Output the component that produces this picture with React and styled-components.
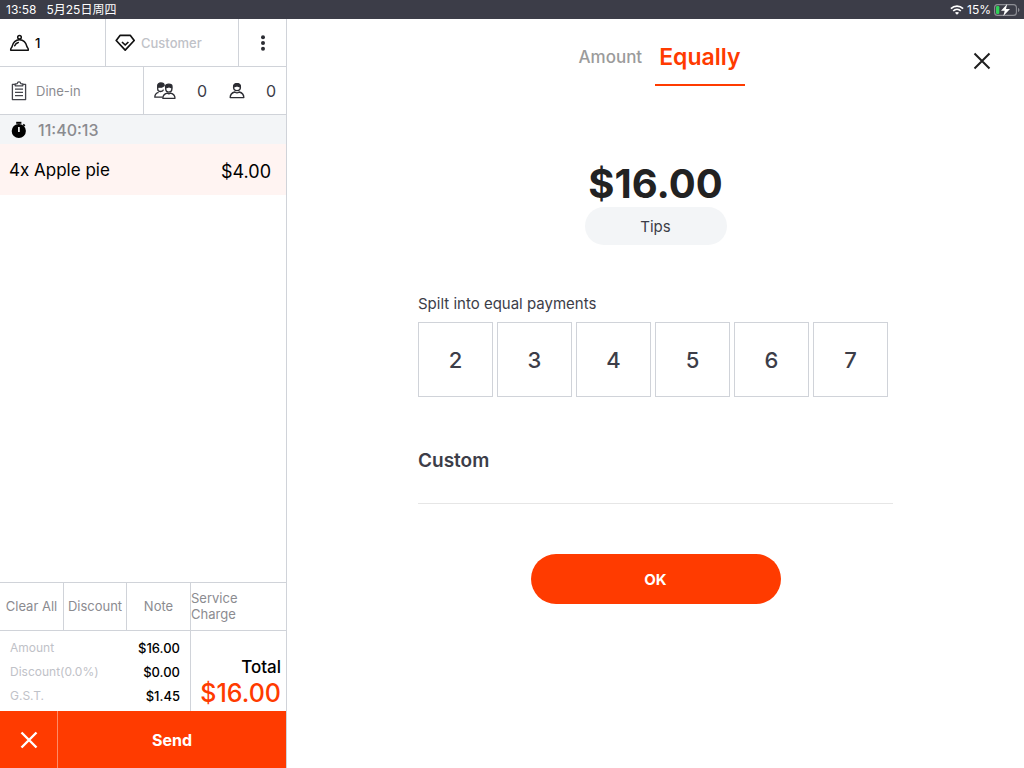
import React, { useState } from "react";
import styled, { ThemeProvider, createGlobalStyle } from "styled-components";

const theme = {
    colors: {
        orange: "#ff3b00",
        line: "#d0d3d9",
        dark: "#3c3d48",
        gray: "#8b8b90",
        light: "#bfc2c8",
        pale: "#f3f5f7",
        black: "#000"
    }
};

const splits = [2, 3, 4, 5, 6, 7];

const summary = [
    { name: "Amount", value: "$16.00" },
    { name: "Discount(0.0%)", value: "$0.00" },
    { name: "G.S.T.", value: "$1.45" }
];

const DishIcon = () => (
    <svg width="20" height="18" viewBox="0 0 20 18" fill="none" stroke="#111" strokeWidth="1.5" strokeLinecap="round" strokeLinejoin="round" aria-hidden="true">
        <circle cx="10.500" cy="3.200" r="1.800" />
        <path d="M1.700 16.200c-.2-2 .8-2.600 1.200-3.200C3.900 8.800 6.700 5.800 10.500 5.800s6.600 3 7.600 7.200c.4.6 1.400 1.200 1.200 3.200z" />
        <path d="M5.700 11.800c.7-1.700 1.900-2.800 3.600-3.300" />
    </svg>
);

const DiamondIcon = () => (
    <svg width="20" height="18" viewBox="0 0 20 18" fill="none" stroke="#111" strokeWidth="1.700" strokeLinejoin="round" aria-hidden="true">
        <path d="M5.200 1.300h10l4 5.200-9 9.600-9-9.600z" />
        <path d="M7 8l3.200 3 3.200-3" />
    </svg>
);

const ClipboardIcon = () => (
    <svg width="16" height="20" viewBox="0 0 16 20" fill="none" stroke="#44454c" strokeWidth="1.300" strokeLinejoin="round" aria-hidden="true">
        <path d="M4 3.400H1.400v15.200h13.200V3.400H12" />
        <path d="M4.200 4.800V3l2-.4C6.400 1.500 7 .9 8 .9s1.600.6 1.800 1.700l2 .4v1.800z" />
        <path d="M4 8.200h8M4 11.400h8M4 14.600h8" />
    </svg>
);

const PeopleIcon = () => (
    <svg width="22" height="18" viewBox="0 0 22 18" fill="none" stroke="#2c2d33" strokeWidth="1.300" strokeLinejoin="round" aria-hidden="true">
        <path d="M3.700 5.200V3.400C3.700 2 4.900 1 6.900 1s3.200.8 3.300 2.600L7.600 5.200z" fill="#2c2d33" />
        <path d="M3.700 5v2c0 1.500 1.400 2.500 2.900 2.500 1.300 0 2.600-.7 2.900-1.900" />
        <path d="M8.600 15.200H.8c0-2.900 1.400-4.300 3.800-4.900" />
        <path d="M11.600 5.800V4.400c0-1.400 1.200-2.200 3.200-2.200s3.200.8 3.200 2.200v1.400c-1.400 0-2.200-.4-3-1-.8.6-2 1-3.400 1z" fill="#2c2d33" />
        <path d="M11.700 5.800v1.300c0 1.700 1.300 3 3.100 3s3.100-1.300 3.100-3V5.800" />
        <path d="M8.800 16.300c0-3 1.600-4.500 4.400-5.200 1 .8 2.400.8 3.400 0 2.800.7 4.400 2.200 4.400 5.200z" />
    </svg>
);

const PersonIcon = () => (
    <svg width="16" height="17" viewBox="0 0 16 17" fill="none" stroke="#2c2d33" strokeWidth="1.400" strokeLinejoin="round" aria-hidden="true">
        <circle cx="8" cy="5.200" r="3.400" />
        <path d="M4.700 4.800C5 2.900 6.200 1.700 8 1.700s3 1.200 3.300 3.100C9.800 4.600 8.900 4.200 8 3.500c-.9.7-1.800 1.100-3.300 1.300z" fill="#2c2d33" />
        <path d="M1.200 15.600c0-3.200 1.700-4.900 4.600-5.600 1.300 1 3.100 1 4.400 0 2.900.7 4.600 2.400 4.600 5.600z" />
    </svg>
);

const StopwatchIcon = () => (
    <svg width="16" height="18" viewBox="0 0 16 18" aria-hidden="true">
        <path d="M5.200.8h5.200v2H5.200z" />
        <path d="M12.800 2.800l1.600 1.400-1.200 1.300-1.500-1.400z" />
        <circle cx="7.800" cy="10" r="7.100" />
        <path d="M7.100 6h1.600v5H7.100z" fill="#fff" />
    </svg>
);

const DotsIcon = () => (
    <svg width="6" height="16" viewBox="0 0 6 16" fill="#2c2d33" aria-hidden="true">
        <circle cx="3" cy="2.200" r="2" />
        <circle cx="3" cy="8" r="2" />
        <circle cx="3" cy="13.800" r="2" />
    </svg>
);

const CrossIcon = ({ size = 18, color = "#1f1f1f", width = 2 }) => (
    <svg width={size} height={size} viewBox="0 0 18 18" fill="none" stroke={color} strokeWidth={width} aria-hidden="true">
        <path d="M1.500 1.500l15 15M16.500 1.500l-15 15" />
    </svg>
);

const WifiIcon = () => (
    <svg width="14" height="10" viewBox="0 0 14 10" fill="none" stroke="#fff" strokeWidth="1.700" aria-hidden="true">
        <path d="M.9 3.700c3.500-3.400 8.700-3.400 12.200 0" />
        <path d="M3.200 6c2.200-2.100 5.400-2.100 7.600 0" />
        <path d="M7 9.800L4.900 7.700c1.200-1.100 3-1.100 4.200 0z" fill="#fff" stroke="none" />
    </svg>
);

const BatteryIcon = () => (
    <svg width="26" height="12" viewBox="0 0 26 12" fill="none" aria-hidden="true">
        <rect x=".6" y=".6" width="21.800" height="10.800" rx="3" stroke="#8d8e95" strokeWidth="1.100" />
        <path d="M24 4v4c.9-.3 1.400-1 1.400-2S24.900 4.300 24 4z" fill="#8d8e95" />
        <rect x="2" y="2" width="3.300" height="8" rx="1.200" fill="#30d158" />
        <path d="M13.200 0L7 6.800h3.700L9.300 12l6.700-7h-4z" fill="#fff" />
    </svg>
);

const App = () => {

    const [tab, setTab] = useState("Equally");
    const [custom, setCustom] = useState("");

    const onChange = (e) => {
        setCustom(e.target.value);
    };

    return (
        <ThemeProvider theme={theme}>
            <GlobalStyle />
            <Screen>
                <StatusBar>
                    <StatusGroup $gap={10}>
                        <span>13:58</span>
                        <span>5月25日周四</span>
                    </StatusGroup>
                    <StatusGroup $gap={3}>
                        <WifiIcon />
                        <span>15%</span>
                        <BatteryIcon />
                    </StatusGroup>
                </StatusBar>
                <Body>
                    <Order>
                        <InfoRow $columns="106px 133px 1fr">
                            <InfoCell $dark>
                                <DishIcon />
                                1
                            </InfoCell>
                            <InfoCell $faint>
                                <DiamondIcon />
                                Customer
                            </InfoCell>
                            <InfoCell $center aria-label="More">
                                <DotsIcon />
                            </InfoCell>
                        </InfoRow>
                        <InfoRow $columns="144px 1fr">
                            <InfoCell>
                                <ClipboardIcon />
                                Dine-in
                            </InfoCell>
                            <Guests>
                                <Guest>
                                    <PeopleIcon />
                                    0
                                </Guest>
                                <Guest>
                                    <PersonIcon />
                                    0
                                </Guest>
                            </Guests>
                        </InfoRow>
                        <Timer>
                            <StopwatchIcon />
                            11:40:13
                        </Timer>
                        <Items>
                            <Item>
                                <span>4x Apple pie</span>
                                <Price>$4.00</Price>
                            </Item>
                        </Items>
                        <Actions>
                            <Action>Clear All</Action>
                            <Action>Discount</Action>
                            <Action>Note</Action>
                            <Action $left>Service Charge</Action>
                        </Actions>
                        <Summary>
                            <Lines>
                                {summary.map((line) =>
                                    <Line key={line.name}>
                                        <dt>{line.name}</dt>
                                        <dd>{line.value}</dd>
                                    </Line>
                                )}
                            </Lines>
                            <Total>
                                <TotalLabel>Total</TotalLabel>
                                <TotalValue>$16.00</TotalValue>
                            </Total>
                        </Summary>
                        <SendBar>
                            <SendButton aria-label="Cancel order">
                                <CrossIcon color="#fff" width={2.4} />
                            </SendButton>
                            <SendButton>Send</SendButton>
                        </SendBar>
                    </Order>
                    <Payment>
                        <PaymentHeader>
                            <Tabs>
                                {["Amount", "Equally"].map((name) =>
                                    <Tab key={name} $active={tab === name} onClick={() => setTab(name)}>{name}</Tab>
                                )}
                            </Tabs>
                            <Close aria-label="Close">
                                <CrossIcon />
                            </Close>
                        </PaymentHeader>
                        <Panel>
                            <Due>$16.00</Due>
                            <Tips>Tips</Tips>
                            <SplitTitle>Spilt into equal payments</SplitTitle>
                            <Splits>
                                {splits.map((count) =>
                                    <Split key={count}>{count}</Split>
                                )}
                            </Splits>
                            <CustomInput
                                type="text"
                                aria-label="Custom"
                                placeholder="Custom"
                                value={custom}
                                onChange={onChange}
                            />
                            <Ok>OK</Ok>
                        </Panel>
                    </Payment>
                </Body>
            </Screen>
        </ThemeProvider>
    )
}

export default App;

const GlobalStyle = createGlobalStyle`
    * {
        box-sizing: border-box;
    }

    body {
        margin: 0;
        background: #fff;
        font-family: Inter, "Noto Sans CJK SC", sans-serif;
    }

    button {
        margin: 0;
        padding: 0;
        border: none;
        background: none;
        color: inherit;
        font: inherit;
        cursor: pointer;
    }

    svg {
        flex-shrink: 0;
    }
`;

const Screen = styled.div`
    display: flex;
    flex-direction: column;
    min-height: 100vh;
`;

const StatusBar = styled.header`
    display: flex;
    justify-content: space-between;
    align-items: center;
    height: 19px;
    padding: 0 4px 0 6px;
    background: ${({ theme }) => theme.colors.dark};
    color: #fff;
    font-size: 12px;
    line-height: 18px;
`;

const StatusGroup = styled.div`
    display: flex;
    align-items: center;
    gap: ${({ $gap }) => $gap}px;
`;

const Body = styled.div`
    display: flex;
    flex: 1;
`;

const Order = styled.aside`
    display: flex;
    flex-direction: column;
    flex-shrink: 0;
    width: 287px;
    border-right: 1px solid ${({ theme }) => theme.colors.line};
`;

const InfoRow = styled.div`
    display: grid;
    grid-template-columns: ${({ $columns }) => $columns};
    height: 48px;
    border-bottom: 1px solid ${({ theme }) => theme.colors.line};
`;

const InfoCell = styled.button`
    display: flex;
    align-items: center;
    justify-content: ${({ $center }) => $center ? "center" : "flex-start"};
    gap: ${({ $dark, $faint }) => $dark || $faint ? "6px" : "9px"};
    padding: 0 ${({ $center }) => $center ? "0" : "9px"};
    padding-left: ${({ $center, $dark, $faint }) => $center ? "0" : $dark || $faint ? "9px" : "11px"};
    color: ${({ $dark, $faint, theme }) => $dark ? theme.colors.black : $faint ? theme.colors.light : theme.colors.gray};
    font-size: 13px;
    font-weight: ${({ $dark, $faint }) => $dark || $faint ? 500 : 400};

    &:not(:last-child) {
        border-right: 1px solid ${({ theme }) => theme.colors.line};
    }
`;

const Guests = styled.div`
    display: flex;
    align-items: center;
    gap: 22px;
    padding: 0 10px;
    color: ${({ theme }) => theme.colors.dark};
    font-size: 16px;
`;

const Guest = styled.div`
    display: flex;
    flex: 1 0 auto;
    align-items: center;
    justify-content: space-between;
`;

const Timer = styled.div`
    display: flex;
    align-items: center;
    gap: 11px;
    height: 29px;
    padding-left: 11px;
    background: ${({ theme }) => theme.colors.pale};
    color: ${({ theme }) => theme.colors.gray};
    font-size: 16px;
    font-weight: 500;
`;

const Items = styled.ul`
    flex: 1;
    margin: 0;
    padding: 0;
    list-style: none;
`;

const Item = styled.li`
    display: flex;
    justify-content: space-between;
    align-items: center;
    height: 51px;
    padding: 0 15px 0 9px;
    background: #fff4f2;
    font-size: 17px;
`;

const Price = styled.span`
    padding-top: 3px;
    font-size: 18px;
`;

const Actions = styled.div`
    display: grid;
    grid-template-columns: 64px 63px 64px 1fr;
    height: 49px;
    border-top: 1px solid ${({ theme }) => theme.colors.line};
    border-bottom: 1px solid ${({ theme }) => theme.colors.line};
`;

const Action = styled.button`
    padding-right: ${({ $left }) => $left ? "40px" : "0"};
    padding-bottom: 2px;
    color: ${({ theme }) => theme.colors.gray};
    font-size: 13px;
    line-height: 16px;
    text-align: ${({ $left }) => $left ? "left" : "center"};

    &:not(:last-child) {
        border-right: 1px solid ${({ theme }) => theme.colors.line};
    }
`;

const Summary = styled.div`
    display: grid;
    grid-template-columns: 191px 1fr;
    height: 80px;
`;

const Lines = styled.dl`
    display: flex;
    flex-direction: column;
    justify-content: flex-end;
    margin: 0;
    padding: 0 10px 3px;
    border-right: 1px solid ${({ theme }) => theme.colors.line};
`;

const Line = styled.div`
    display: flex;
    justify-content: space-between;
    font-size: 12px;
    line-height: 24px;

    dt {
        color: ${({ theme }) => theme.colors.light};
    }

    dd {
        margin: 0;
        font-size: 13px;
        font-weight: 500;
    }
`;

const Total = styled.div`
    display: flex;
    flex-direction: column;
    justify-content: flex-end;
    padding: 0 5px 4px 0;
    text-align: right;
    font-weight: 500;
`;

const TotalLabel = styled.span`
    font-size: 17px;
    line-height: 24px;
`;

const TotalValue = styled.span`
    color: ${({ theme }) => theme.colors.orange};
    font-size: 25px;
    line-height: 28px;
`;

const SendBar = styled.div`
    display: grid;
    grid-template-columns: 58px 1fr;
    height: 57px;
    background: ${({ theme }) => theme.colors.orange};
`;

const SendButton = styled.button`
    display: flex;
    align-items: center;
    justify-content: center;
    color: #fff;
    font-size: 16px;
    font-weight: 700;

    &:first-child {
        border-right: 1px solid #ff8a66;
    }
`;

const Payment = styled.main`
    display: flex;
    flex-direction: column;
    flex: 1;
`;

const PaymentHeader = styled.div`
    display: grid;
    grid-template-columns: 1fr auto 1fr;
    align-items: start;
    padding-top: 10px;
    height: 83px;
`;

const Tabs = styled.nav`
    display: flex;
    grid-column: 2;
    align-items: center;
    gap: 9px;
    padding-left: 8px;
`;

const Tab = styled.button`
    padding: 0 4px;
    height: 57px;
    border-bottom: 2px solid ${({ $active, theme }) => $active ? theme.colors.orange : "transparent"};
    color: ${({ $active, theme }) => $active ? theme.colors.orange : "#9b9b9b"};
    font-size: ${({ $active }) => $active ? "23px" : "17px"};
    font-weight: ${({ $active }) => $active ? 600 : 500};
`;

const Close = styled.button`
    display: flex;
    justify-self: end;
    margin: 23px 33px 0 0;
`;

const Panel = styled.section`
    display: flex;
    flex-direction: column;
    align-items: center;
    width: 100%;
    max-width: 475px;
    margin: 0 auto;
`;

const Due = styled.div`
    margin-top: 58px;
    color: #222;
    font-size: 40px;
    font-weight: 700;
    line-height: 47px;
`;

const Tips = styled.button`
    width: 142px;
    height: 38px;
    border-radius: 19px;
    background: ${({ theme }) => theme.colors.pale};
    color: ${({ theme }) => theme.colors.dark};
    font-size: 15px;
`;

const SplitTitle = styled.h2`
    align-self: flex-start;
    margin: 49px 0 8px;
    color: ${({ theme }) => theme.colors.dark};
    font-size: 15px;
    font-weight: 400;
    line-height: 20px;
`;

const Splits = styled.div`
    display: flex;
    align-self: flex-start;
    gap: 4px;
`;

const Split = styled.button`
    width: 75px;
    height: 75px;
    border: 1px solid ${({ theme }) => theme.colors.line};
    color: ${({ theme }) => theme.colors.dark};
    font-size: 22px;
    font-weight: 500;
`;

const CustomInput = styled.input`
    width: 100%;
    height: 86px;
    margin-top: 21px;
    padding: 0;
    border: none;
    border-bottom: 1px solid #e6e6e6;
    outline: none;
    color: ${({ theme }) => theme.colors.dark};
    font-family: inherit;
    font-size: 19px;
    font-weight: 600;

    &::placeholder {
        color: ${({ theme }) => theme.colors.dark};
        opacity: 1;
    }
`;

const Ok = styled.button`
    width: 250px;
    height: 50px;
    margin-top: 50px;
    border-radius: 25px;
    background: ${({ theme }) => theme.colors.orange};
    color: #fff;
    font-size: 15px;
    font-weight: 700;
`;
